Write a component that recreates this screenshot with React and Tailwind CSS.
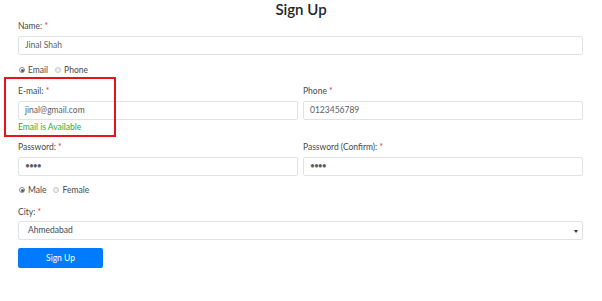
import React from 'react';

const Req = () => <span className="text-[#dc3545]"> *</span>;

const Label = ({ children, className = '' }) => (
    <div className={`h-[12px] leading-[12px] text-[8.5px] text-[#44494e] ${className}`}>
        {children}
        <Req />
    </div>
);

const Input = ({ value, className = '' }) => (
    <div className={`h-[19px] border border-[#dfe3e7] rounded-[2px] bg-white pl-[6px] flex items-center text-[8.5px] text-[#5a6066] ${className}`}>
        {value}
    </div>
);

const Radio = ({ label, checked }) => (
    <div className="flex items-center gap-[3px]">
        <span className={`w-[6px] h-[6px] rounded-full border flex items-center justify-center ${checked ? 'border-[#8a8f94] bg-white' : 'border-[#c4c8cc] bg-[#eef0f2]'}`}>
            {checked && <span className="w-[3px] h-[3px] rounded-full bg-[#55595d]" />}
        </span>
        <span>{label}</span>
    </div>
);

const App = () => {
    return (
        <div className="relative w-[602px] h-[301px] bg-white overflow-hidden font-['Lato',sans-serif]">
            <div className="h-[18px] leading-[18px] text-center text-[15px] font-semibold text-[#212529]">Sign Up</div>

            <div className="px-[18px] pr-[19px] flex flex-col">
                <Label className="mt-[2px]">Name:</Label>
                <Input value="Jinal Shah" className="mt-[4px]" />

                <div className="mt-[9px] h-[12px] flex items-center gap-[7px] text-[8.5px] text-[#44494e] pl-[1px]">
                    <Radio label="Email" checked />
                    <Radio label="Phone" />
                </div>

                <div className="mt-[9px] grid grid-cols-2 gap-x-[5px]">
                    <div className="flex flex-col">
                        <Label>E-mail:</Label>
                        <Input value="jinal@gmail.com" className="mt-[4px]" />
                        <div className="mt-[1px] h-[12px] leading-[12px] text-[8.5px] text-[#28a745]">Email is Available</div>
                    </div>
                    <div className="flex flex-col">
                        <Label>Phone</Label>
                        <Input value="0123456789" className="mt-[4px]" />
                    </div>
                </div>

                <div className="mt-[8px] grid grid-cols-2 gap-x-[5px]">
                    <div className="flex flex-col">
                        <Label>Password:</Label>
                        <Input value="••••" className="mt-[4px] tracking-[-1px] text-[7px]" />
                    </div>
                    <div className="flex flex-col">
                        <Label>Password (Confirm):</Label>
                        <Input value="••••" className="mt-[4px] tracking-[-1px] text-[7px]" />
                    </div>
                </div>

                <div className="mt-[8px] h-[12px] flex items-center gap-[7px] text-[8.5px] text-[#44494e] pl-[1px]">
                    <Radio label="Male" checked />
                    <Radio label="Female" />
                </div>

                <Label className="mt-[10px]">City:</Label>
                <div className="mt-[3px] h-[19px] border border-[#dfe3e7] rounded-[2px] bg-white pl-[9px] pr-[4px] flex items-center justify-between text-[8.5px] text-[#44494e]">
                    <span>Ahmedabad</span>
                    <svg width="4" height="4" viewBox="0 0 4 4">
                        <path d="M0 1 L4 1 L2 4 Z" fill="#333" />
                    </svg>
                </div>

                <button className="mt-[8px] w-[85px] h-[20px] rounded-[2px] bg-[#007bff] text-white text-[8.5px] flex items-center justify-center">
                    Sign Up
                </button>
            </div>

            <div className="absolute left-[4px] top-[77px] w-[112px] h-[60px] border-2 border-[#e5141c]" />
        </div>
    );
};

export default App;
